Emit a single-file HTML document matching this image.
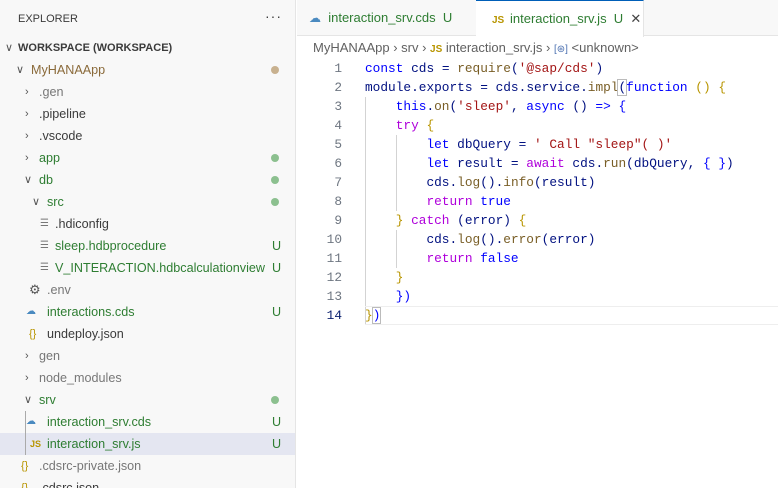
<!DOCTYPE html>
<html><head><style>
*{margin:0;padding:0;box-sizing:border-box}
body{width:778px;height:488px;overflow:hidden;background:#fff;font-family:"Liberation Sans","DejaVu Sans",sans-serif;font-size:12.6px;color:#3b3b3b;position:relative}
#side{position:absolute;left:0;top:0;width:296px;height:488px;background:#f8f8f8;border-right:1px solid #e5e5e5;overflow:hidden}
.hdr{position:absolute;left:18px;top:13px;font-size:11px;color:#3b3b3b}
.dots{position:absolute;left:265px;top:8px;font-size:14px;letter-spacing:1px}
.row{position:absolute;left:0;width:296px;height:22px;line-height:22px;white-space:nowrap}
.row .t{position:absolute}
.chev{position:absolute;font-size:11px;color:#555}
.g{color:#2e7d32}.gr{color:#777}.br{color:#8a6a3a}
.u{position:absolute;left:272px;color:#2e7d32}
.dot{position:absolute;left:271px;top:7px;width:8px;height:8px;border-radius:50%;background:#8cc08f}
.ico{position:absolute;font-size:10px}
.sel{background:#e4e6f1}
#tabs{position:absolute;left:297px;top:0;width:481px;height:36px;background:#f8f8f8;border-bottom:1px solid #e5e5e5}
.tab{position:absolute;top:0;height:36px;line-height:36px;font-size:13px;color:#2e7d32}
#act{left:179px;width:168px;background:#fff;border-top:1px solid #005fb8;border-right:1px solid #e5e5e5;height:37px}
#bc{position:absolute;left:313px;top:40px;font-size:13px;color:#616161}
#code{position:absolute;left:300px;top:59px;font-family:"Liberation Mono","DejaVu Sans Mono",monospace;font-size:12.8px}
.l{position:relative;height:19px;line-height:19px;white-space:pre}
.n{position:absolute;left:0;width:42px;text-align:right;color:#6e7681}
.c{position:absolute;left:65px;color:#001080}
.k{color:#0000ff}.p{color:#af00db}.s{color:#a31515}.f{color:#795e26}.v{color:#001080}.y{color:#b89500}.m{color:#b000b0}
.guide{position:absolute;width:1px;background:#d3d3d3}
</style></head><body>
<div id="side">
<div class="hdr">EXPLORER</div><div class="dots">···</div>
<div class="row" style="top:37px"><span class="chev" style="left:5px">∨</span><span class="t" style="left:18px;font-weight:bold;font-size:11px">WORKSPACE (WORKSPACE)</span></div>
<div class="row" style="top:59px"><span class="chev" style="left:16px">∨</span><span class="t br" style="left:31px">MyHANAApp</span><span class="dot" style="background:#c8b18f"></span></div>
<div class="row" style="top:81px"><span class="chev" style="left:25px">›</span><span class="t gr" style="left:39px">.gen</span></div>
<div class="row" style="top:103px"><span class="chev" style="left:25px">›</span><span class="t" style="left:39px">.pipeline</span></div>
<div class="row" style="top:125px"><span class="chev" style="left:25px">›</span><span class="t" style="left:39px">.vscode</span></div>
<div class="row" style="top:147px"><span class="chev" style="left:25px">›</span><span class="t g" style="left:39px">app</span><span class="dot"></span></div>
<div class="row" style="top:169px"><span class="chev" style="left:24px">∨</span><span class="t g" style="left:39px">db</span><span class="dot"></span></div>
<div class="row" style="top:191px"><span class="chev" style="left:32px">∨</span><span class="t g" style="left:47px">src</span><span class="dot"></span></div>
<div class="row" style="top:213px"><span class="ico gr" style="left:40px">☰</span><span class="t" style="left:55px">.hdiconfig</span></div>
<div class="row" style="top:235px"><span class="ico gr" style="left:40px">☰</span><span class="t g" style="left:55px">sleep.hdbprocedure</span><span class="u">U</span></div>
<div class="row" style="top:257px"><span class="ico gr" style="left:40px">☰</span><span class="t g" style="left:55px">V_INTERACTION.hdbcalculationview</span><span class="u">U</span></div>
<div class="row" style="top:279px"><span class="ico" style="left:29px;font-size:13px;color:#555">⚙</span><span class="t gr" style="left:47px">.env</span></div>
<div class="row" style="top:301px"><span class="ico" style="left:26px;color:#4a8ac0">☁</span><span class="t g" style="left:47px">interactions.cds</span><span class="u">U</span></div>
<div class="row" style="top:323px"><span class="ico y" style="left:29px;font-size:11px">{}</span><span class="t" style="left:47px">undeploy.json</span></div>
<div class="row" style="top:345px"><span class="chev" style="left:25px">›</span><span class="t gr" style="left:39px">gen</span></div>
<div class="row" style="top:367px"><span class="chev" style="left:25px">›</span><span class="t gr" style="left:39px">node_modules</span></div>
<div class="row" style="top:389px"><span class="chev" style="left:24px">∨</span><span class="t g" style="left:39px">srv</span><span class="dot"></span></div>
<div class="row" style="top:411px"><span class="ico" style="left:26px;color:#4a8ac0">☁</span><span class="t g" style="left:47px">interaction_srv.cds</span><span class="u">U</span></div>
<div class="row sel" style="top:433px"><span class="ico y" style="left:30px;font-size:9px;font-weight:bold">JS</span><span class="t g" style="left:47px">interaction_srv.js</span><span class="u">U</span></div>
<div style="position:absolute;left:25px;top:411px;width:1px;height:44px;background:#aaa"></div>
<div class="row" style="top:455px"><span class="ico y" style="left:21px;font-size:11px">{}</span><span class="t gr" style="left:39px">.cdsrc-private.json</span></div>
<div class="row" style="top:477px"><span class="ico y" style="left:21px;font-size:11px">{}</span><span class="t" style="left:39px">.cdsrc.json</span></div>
</div>
<div id="tabs">
<div class="tab" style="left:12px"><span style="color:#4a8ac0;font-size:12px">☁</span>&nbsp; interaction_srv.cds&nbsp; U</div>
<div class="tab" id="act"><span style="position:absolute;left:16px" class="y"><b style="font-size:10px">JS</b></span><span style="position:absolute;left:34px">interaction_srv.js&nbsp; U&nbsp;&nbsp;<span style="color:#444">✕</span></span></div>
</div>
<div id="bc">MyHANAApp › srv › <b class="y" style="font-size:10px">JS</b> interaction_srv.js › <span style="color:#4a6fb0;font-size:10px">[⊛]</span> &lt;unknown&gt;</div>
<div class="guide" style="left:365px;top:97px;height:228px"></div>
<div class="guide" style="left:396px;top:135px;height:76px"></div>
<div class="guide" style="left:396px;top:230px;height:38px"></div>
<div style="position:absolute;left:365px;top:306px;width:413px;height:19px;border-top:1px solid #eee;border-bottom:1px solid #eee"></div>
<div id="code">
<div class="l"><span class="n">1</span><span class="c"><span class="k">const</span> <span class="v">cds</span> = <span class="f">require</span>(<span class="s">'@sap/cds'</span>)</span></div>
<div class="l"><span class="n">2</span><span class="c"><span class="v">module</span>.<span class="v">exports</span> = <span class="v">cds</span>.<span class="v">service</span>.<span class="f">impl</span><span style="outline:1px solid #bbb">(</span><span class="k">function</span> <span class="y">()</span> <span class="y">{</span></span></div>
<div class="l"><span class="n">3</span><span class="c">    <span class="k">this</span>.<span class="f">on</span>(<span class="s">'sleep'</span>, <span class="k">async</span> () <span class="k">=&gt;</span> <span class="k">{</span></span></div>
<div class="l"><span class="n">4</span><span class="c">    <span class="p">try</span> <span class="y">{</span></span></div>
<div class="l"><span class="n">5</span><span class="c">        <span class="k">let</span> <span class="v">dbQuery</span> = <span class="s">' Call "sleep"( )'</span></span></div>
<div class="l"><span class="n">6</span><span class="c">        <span class="k">let</span> <span class="v">result</span> = <span class="p">await</span> <span class="v">cds</span>.<span class="f">run</span>(<span class="v">dbQuery</span>, <span class="k">{ }</span>)</span></div>
<div class="l"><span class="n">7</span><span class="c">        <span class="v">cds</span>.<span class="f">log</span>().<span class="f">info</span>(<span class="v">result</span>)</span></div>
<div class="l"><span class="n">8</span><span class="c">        <span class="p">return</span> <span class="k">true</span></span></div>
<div class="l"><span class="n">9</span><span class="c">    <span class="y">}</span> <span class="p">catch</span> (<span class="v">error</span>) <span class="y">{</span></span></div>
<div class="l"><span class="n">10</span><span class="c">        <span class="v">cds</span>.<span class="f">log</span>().<span class="f">error</span>(<span class="v">error</span>)</span></div>
<div class="l"><span class="n">11</span><span class="c">        <span class="p">return</span> <span class="k">false</span></span></div>
<div class="l"><span class="n">12</span><span class="c">    <span class="y">}</span></span></div>
<div class="l"><span class="n">13</span><span class="c">    <span class="k">})</span></span></div>
<div class="l"><span class="n" style="color:#0b216f">14</span><span class="c"><span class="y">}</span><span class="k" style="outline:1px solid #bbb">)</span></span></div>
</div>
</body></html>
